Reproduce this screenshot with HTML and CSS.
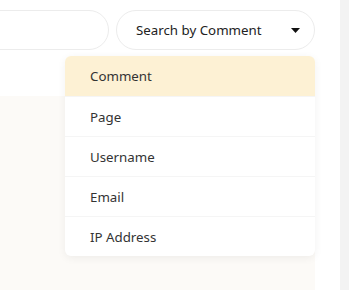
FILE: index.html
```html
<!DOCTYPE html>
<html lang="en">
<head>
<meta charset="utf-8">
<link rel="stylesheet" href="styles.css">
</head>
<body>
<div class="page">
  <div class="main">
    <div class="toolbar">
      <div class="search-input"></div>
      <div class="select-wrap">
        <button class="select-btn">
          <span class="select-label">Search by Comment</span>
          <svg class="caret" width="9" height="5" viewBox="0 0 9 5"><path d="M0 0H9L4.5 5Z" fill="#111"/></svg>
        </button>
        <ul class="menu">
          <li class="menu-item active">Comment</li>
          <li class="menu-item">Page</li>
          <li class="menu-item">Username</li>
          <li class="menu-item">Email</li>
          <li class="menu-item">IP Address</li>
        </ul>
      </div>
    </div>
    <div class="content"></div>
  </div>
  <div class="gutter"></div>
  <div class="scrollbar"></div>
</div>
</body>
</html>
```
FILE: styles.css
```css
* { box-sizing: border-box; }
html, body { margin: 0; padding: 0; height: 100%; }
body {
  background: #fff;
  font-family: "Noto Sans", "Open Sans", sans-serif;
  color: #333;
  overflow: hidden;
}
.page {
  display: grid;
  grid-template-columns: 315px 25px 9px;
  height: 290px;
}
.main {
  display: flex;
  flex-direction: column;
  min-width: 0;
}
.toolbar {
  display: flex;
  gap: 7px;
  padding-top: 10px;
  height: 96px;
  align-items: flex-start;
}
.search-input {
  margin-left: -120px;
  width: 229px;
  height: 40px;
  border: 1px solid #ececec;
  border-radius: 20px;
  background: #fff;
}
.select-wrap {
  position: relative;
  width: 199px;
}
.select-btn {
  width: 199px;
  height: 40px;
  border: 1px solid #ececec;
  border-radius: 20px;
  background: #fff;
  display: flex;
  align-items: center;
  justify-content: space-between;
  padding: 0 14px 0 19px;
  font: inherit;
  font-size: 13.3px;
  color: #222;
}
.caret { display: block; }
.menu {
  position: absolute;
  top: 46px;
  left: -51px;
  width: 250px;
  margin: 0;
  padding: 0;
  list-style: none;
  background: #fff;
  border-radius: 6px;
  box-shadow: 0 2px 8px rgba(0,0,0,0.06);
  overflow: hidden;
}
.menu-item {
  height: 40px;
  display: flex;
  align-items: center;
  padding-left: 25px;
  font-size: 13.3px;
  color: #333;
  border-top: 1px solid #f5f5f5;
}
.menu-item:first-child { border-top: none; }
.menu-item.active { background: #fdf1d4; }
.content {
  flex: 1;
  background: #fcfaf7;
}
.gutter { background: #fff; }
.scrollbar { background: #f3f3f3; }
```
